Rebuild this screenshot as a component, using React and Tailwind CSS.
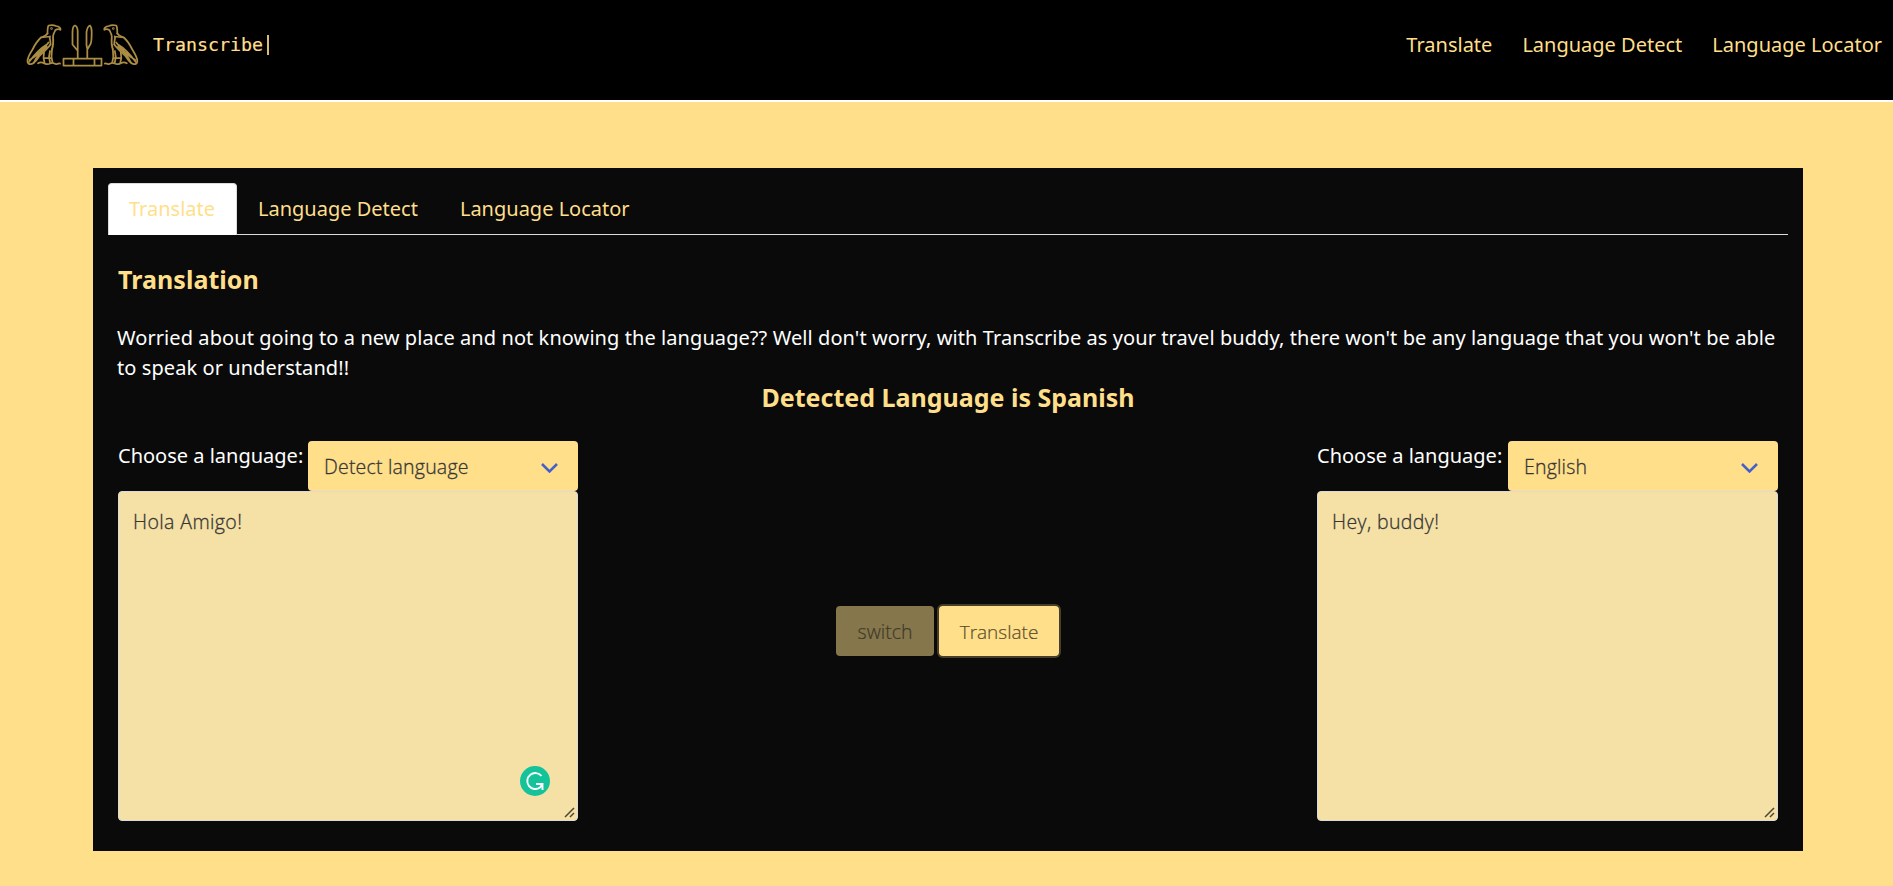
function Bird() {
  return (
    <g>
      <path d="M47.500 33.500C47.500 30 47.500 27 48.500 25.500C51 25 54 25 56 26C59 26.300 61 28 60.500 29.800C59 28.800 57 29 55.500 30C54.500 32 53 34 53 36.500C53.500 41 53.500 45 52 49.500" />
      <path d="M47.500 33.500C46 36 43.500 36.500 41 37.500C37 41 34.500 45.500 32.500 49.500C30 53.500 27.500 57.500 27.500 61C27.500 64.500 31 65 33.500 63C36 61 37.500 59 39 56.500C42 53 47 49.500 50.500 44.500" />
      <path d="M41 37.500L50 36.500M50 36.500C49 39 51 41 50.500 44.500M48.500 42.500C44 49 37 55.500 29.500 60M46 45C40 48.500 35 54 29 62M47 47C42 51 37 55 34 62.500" />
      <path d="M44 52.500L43.500 58L44.500 62.500M52 49L51.500 57L52.500 62.500M50 51L49 57L50 62.500M44 58H51" />
      <path d="M38 63.300C40 62 42 62 44 63.300S49 64 51 63.200C53 62 54.500 64 56 64C58 64.300 59 63 60 63.500" />
      <circle cx="51.500" cy="28.500" r=".4" />
    </g>
  );
}

function Logo() {
  return (
    <svg className="h-[100px] w-[145px] shrink-0 fill-none stroke-[#ab8d45] [stroke-linecap:round] [stroke-linejoin:round] [stroke-width:1.750]" viewBox="0 0 145 100">
      <Bird />
      <g transform="translate(164.800 0) scale(-1 1)"><Bird /></g>
      <path d="M63.500 58.500h38v7h-38zM73.500 58.500v7M94.500 58.500v7" />
      <path d="M77.700 58V31C77.500 28 76.500 26 75 25.500C73.500 26 72.500 29 72.500 32V44.500L77 50" />
      <path d="M87.300 58V49L86.500 45V32C87 29 88.500 26 90 25.500C91.500 27 91.700 29 91.700 32C91.700 38 91.700 42 90.500 44L87.300 49.500" />
    </svg>
  );
}

function Language({ value }) {
  return (
    <div className="flex justify-between">
      <label className="leading-[29px]">Choose a language:</label>
      <div className="flex h-[50px] w-[270px] items-center justify-between rounded-[4px] bg-[#ffdf8a] pr-[20px] pl-4 font-light text-[#363636]">
        <span className="pt-[2px] [font-family:'Open_Sans','Noto_Sans',sans-serif] text-[19.500px] tracking-[0.200px] [-webkit-text-stroke:0.300px_#363636]">{value}</span>
        <svg className="mt-[3px] h-[10px] w-[17px] fill-none stroke-[#485fc7] [stroke-width:2.500]" viewBox="0 0 17 10"><path d="M1 1l7.500 7.500L16 1" /></svg>
      </div>
    </div>
  );
}

function TextBox({ children, badge }) {
  return (
    <div className="relative h-[330px] rounded-[4px] border border-[#dbdbdb] bg-[#f5e1a5] px-[14px] py-[15px] [font-family:'Open_Sans','Noto_Sans',sans-serif] text-[19.500px] leading-[30px] font-light tracking-[0.400px] text-[#363636] [-webkit-text-stroke:0.300px_#363636]">
      {children}
      {badge && (
        <svg className="absolute right-[27px] bottom-[24px] size-[30px]" viewBox="0 0 30 30">
          <circle cx="15" cy="15" r="15" fill="#15c39a" />
          <path d="M21.500 10A8 8 0 1 0 20 21.500L22.500 18M16 18h6.500v6" fill="none" stroke="#fff" strokeWidth="1.900" />
        </svg>
      )}
      <svg className="absolute right-[2px] bottom-[2px] size-[11px] stroke-[#4d4833] [stroke-width:1.500]" viewBox="0 0 11 11"><path d="M1 10L10 1M6 10l4-4" /></svg>
    </div>
  );
}

export default function App() {
  return (
    <div className="h-[886px] overflow-hidden bg-[#ffdf8a] [font-family:'Noto_Sans',sans-serif] text-[20px] leading-[30px] text-white">
      <header className="flex h-[102px] items-start justify-between border-b-2 border-white bg-black pr-[11px] text-[#ffdf8a]">
        <div className="flex">
          <Logo />
          <div className="flex pt-[30px] pl-[8px] [font-family:'DejaVu_Sans_Mono',monospace] text-[18.300px] [-webkit-text-stroke:0.200px_#ffdf8a]">
            Transcribe<span className="mt-[5px] ml-[4px] h-[20px] w-[2px] bg-[#d9bd73]" />
          </div>
        </div>
        <nav className="flex gap-[30px] pt-[30px]">
          <a>Translate</a><a>Language Detect</a><a>Language Locator</a>
        </nav>
      </header>
      <main className="mt-[66px] mr-[90px] ml-[93px] h-[683px] bg-[#0a0a0a] p-[15px]">
        <div className="flex h-[52px] border-b border-[#dbdbdb] text-[#ffdf8a]">
          <a className="h-[52px] w-[129px] rounded-t-[4px] border border-b-0 border-[#dbdbdb] bg-white px-[20px] pt-[10px]">Translate</a>
          <a className="px-[21px] pt-[11px]">Language Detect</a>
          <a className="px-[21px] pt-[11px]">Language Locator</a>
        </div>
        <section className="px-[10px] pt-[29px]">
          <h1 className="text-[25px] font-bold tracking-[0.050px] text-[#ffdf8a]">Translation</h1>
          <p className="mt-[29px] -ml-px tracking-[0.075px]">Worried about going to a new place and not knowing the language?? Well don't worry, with Transcribe as your travel buddy, there won't be any language that you won't be able to speak or understand!!</p>
          <h2 className="-mt-px text-center text-[25px] font-bold text-[#ffdf8a]">Detected Language is Spanish</h2>
          <div className="mt-[29px] flex justify-between">
            <div className="w-[460px]"><Language value="Detect language" /><TextBox badge>Hola Amigo!</TextBox></div>
            <div className="flex gap-[5px] pt-[165px] [font-family:'Open_Sans','Noto_Sans',sans-serif] text-[19.500px] font-light">
              <button className="h-[50px] w-[98px] rounded-[4px] bg-[#85764b] pt-[2px] text-[#403a2a] [-webkit-text-stroke:0.200px_#403a2a]">switch</button>
              <button className="h-[50px] w-[120px] rounded-[4px] bg-[#ffdf8a] pt-[2px] text-[19px] text-[#5a4e2c] ring-2 ring-[#463e28] [-webkit-text-stroke:0.200px_#5a4e2c]">Translate</button>
            </div>
            <div className="w-[461px]"><Language value="English" /><TextBox>Hey, buddy!</TextBox></div>
          </div>
        </section>
      </main>
    </div>
  );
}
